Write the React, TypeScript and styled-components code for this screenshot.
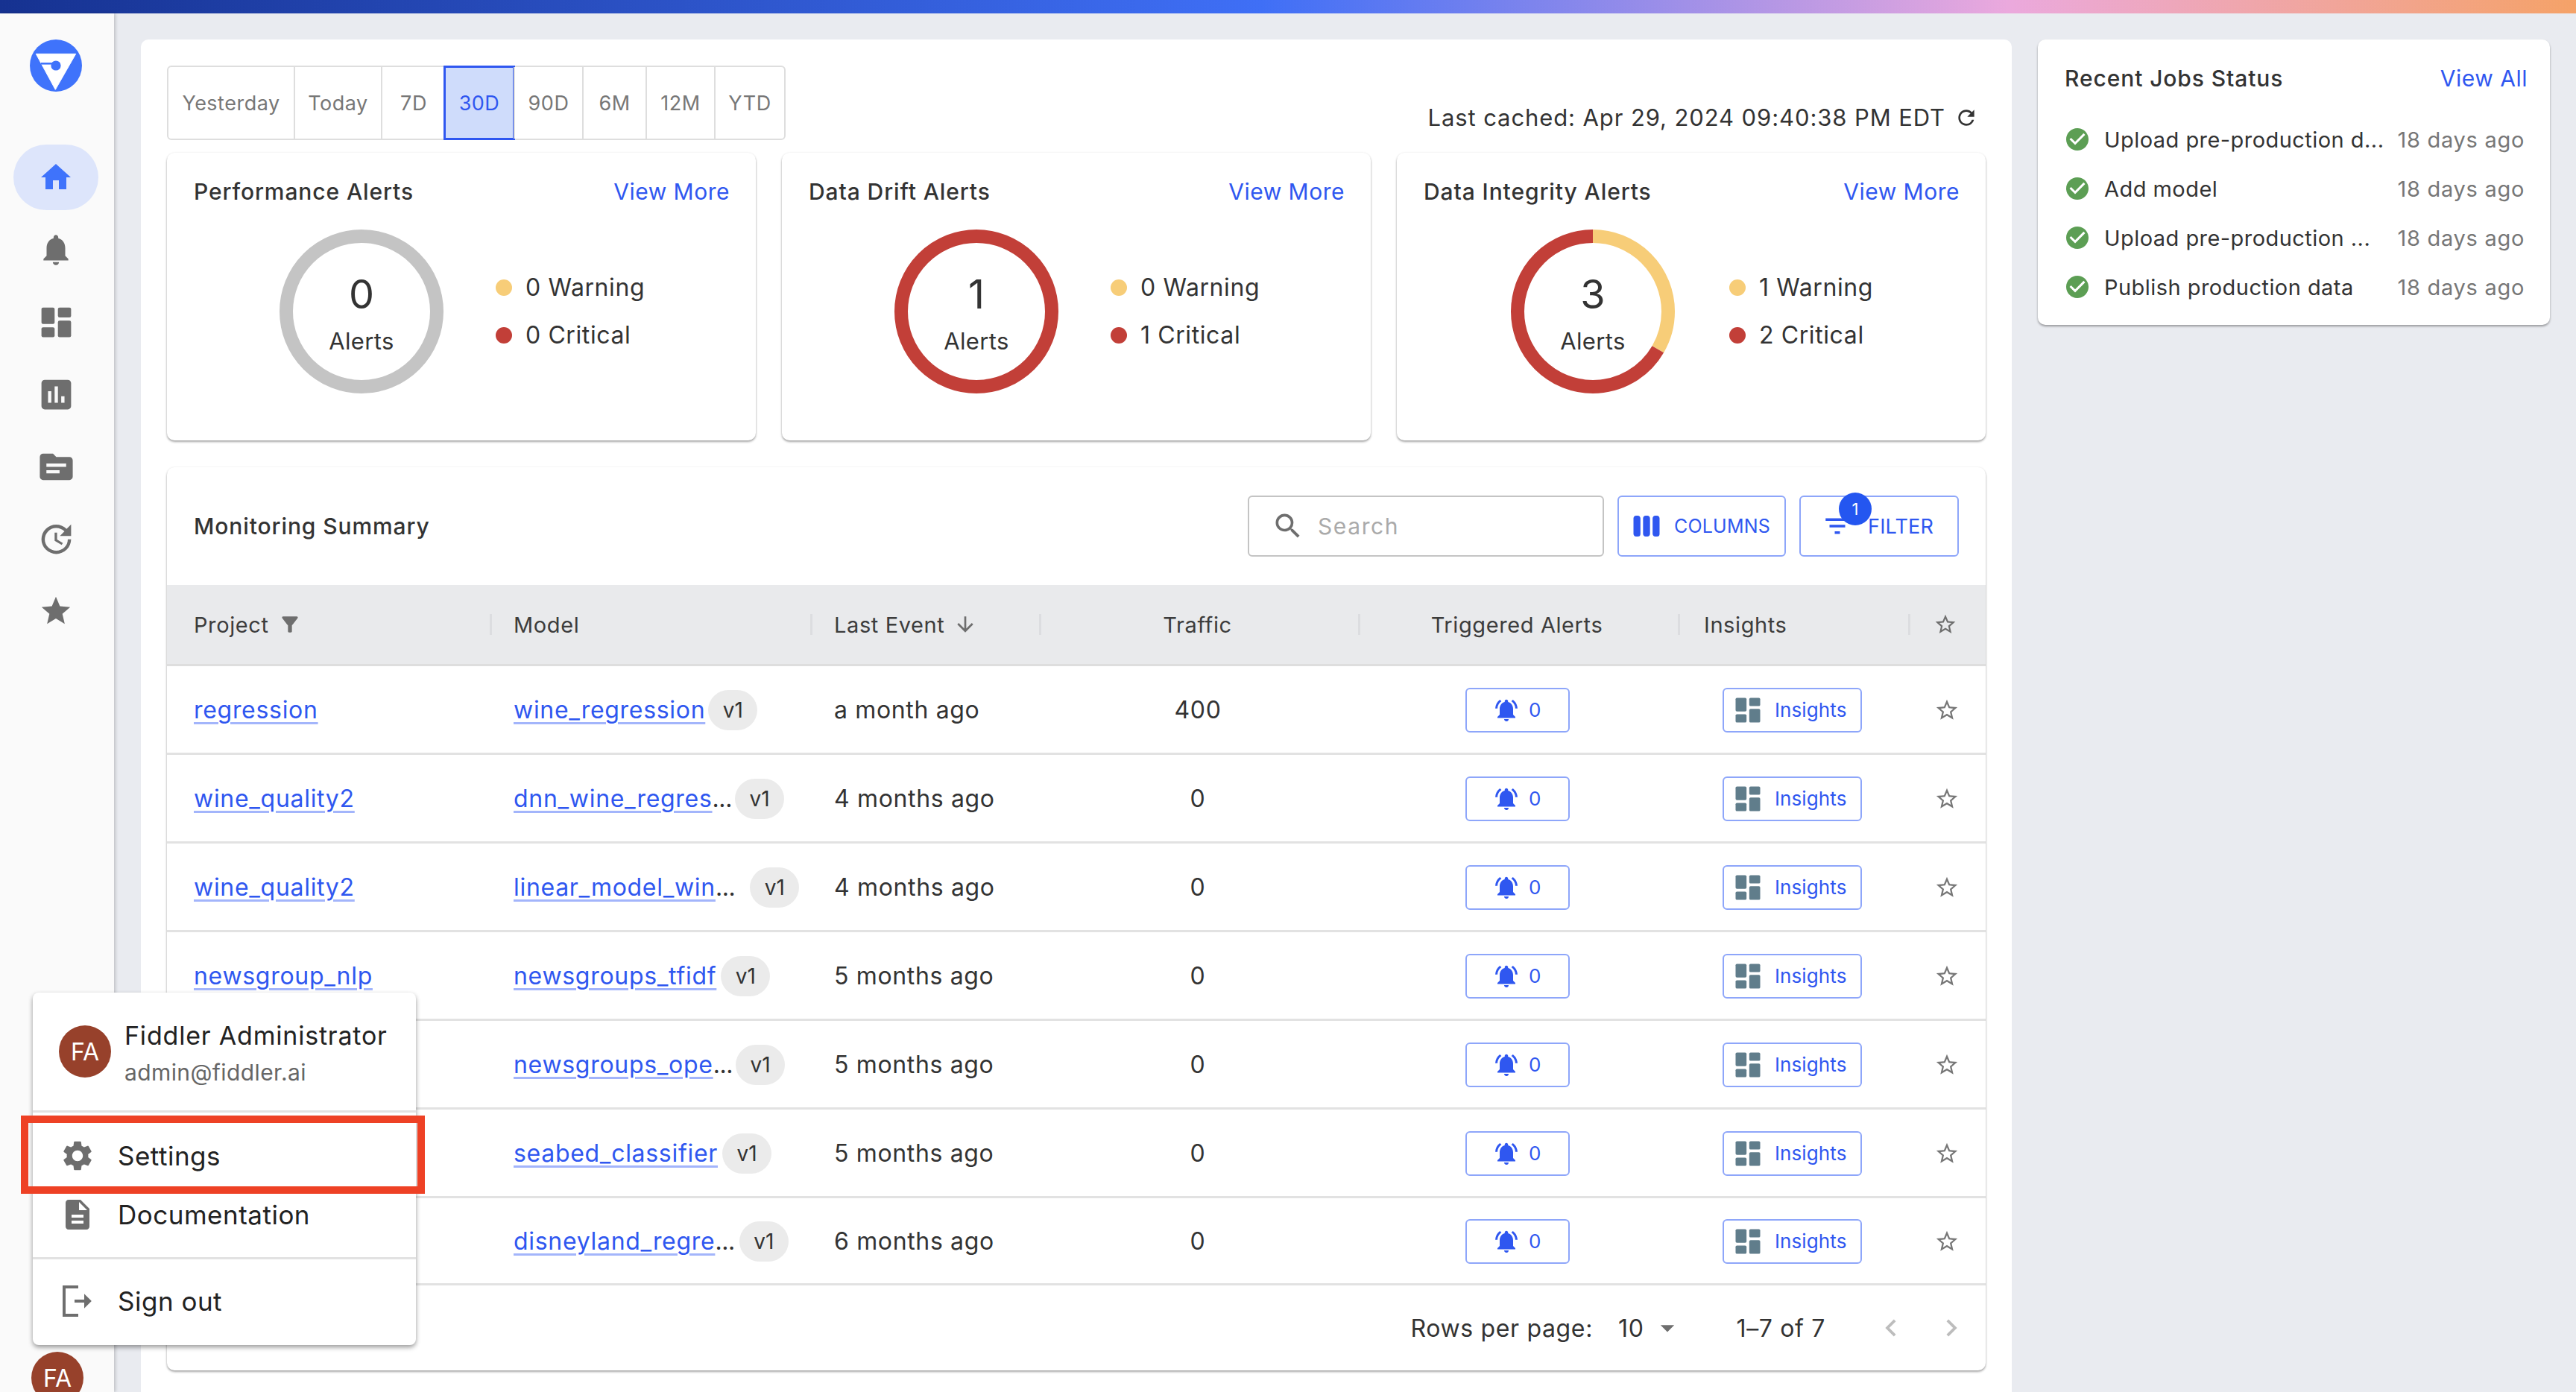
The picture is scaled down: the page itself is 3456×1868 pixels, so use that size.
import styled, { createGlobalStyle } from "styled-components";
import {
    MdHome, MdNotifications, MdAssessment, MdTopic, MdUpdate, MdStar, MdStarBorder,
    MdSettings, MdDescription, MdFilterList, MdViewWeek, MdSearch, MdCheckCircle, MdNotificationsActive,
    MdFilterAlt, MdArrowDownward, MdRefresh, MdArrowDropDown, MdChevronLeft, MdChevronRight,
} from "react-icons/md";

const GlobalStyle = createGlobalStyle`
    html, body {
        margin: 0;
        padding: 0;
        background: #e9ebf0;
    }
    * {
        box-sizing: border-box;
    }
    body {
        font-family: Inter, "Noto Sans", sans-serif;
        color: #333;
    }
`
const Page = styled.div`
    position: relative;
    width: 3456px;
    height: 1868px;
    overflow: hidden;
    display: flex;
    flex-direction: column;
`
const TopBar = styled.div`
    height: 18px;
    flex: none;
    background: linear-gradient(90deg, #163291 0%, #3f6ff6 49%, #eba9dd 78%, #f5a268 100%);
`
const Body = styled.div`
    flex: 1;
    display: flex;
    min-height: 0;
`
const Sidebar = styled.nav`
    width: 153px;
    flex: none;
    background: #fafafa;
    box-shadow: 2px 0 4px rgba(0, 0, 0, 0.18);
    display: flex;
    flex-direction: column;
    align-items: center;
    padding: 35px 3px 0 0;
`
const Logo = styled.svg`
    width: 70px;
    height: 70px;
    margin-bottom: 71px;
    flex: none;
`
const NavItem = styled.div<{ $active?: boolean; $size?: number }>`
    width: 114px;
    height: 88px;
    margin-bottom: 9px;
    border-radius: 44px;
    display: flex;
    align-items: center;
    justify-content: center;
    font-size: ${props => props.$size || 53}px;
    color: ${props => props.$active ? "#3f73fb" : "#6e6e6e"};
    background: ${props => props.$active ? "#dde5fb" : "transparent"};
`
const Main = styled.main`
    flex: 1;
    display: grid;
    grid-template-columns: 2510px 687px;
    column-gap: 35px;
    padding: 35px 35px 0 36px;
    align-items: start;
`
const Panel = styled.section`
    background: #fff;
    border-radius: 10px 10px 0 0;
    height: 1900px;
    padding: 35px;
`
const RangeRow = styled.div`
    display: flex;
    justify-content: space-between;
    align-items: flex-end;
    height: 100px;
    margin-bottom: 17px;
`
const Range = styled.div`
    display: flex;
    height: 100px;
    border: 2px solid #dedede;
    border-radius: 6px;
`
const RangeItem = styled.div<{ $w: number; $active?: boolean }>`
    width: ${props => props.$w}px;
    display: flex;
    align-items: center;
    justify-content: center;
    font-size: 27px;
    letter-spacing: 0.5px;
    color: ${props => props.$active ? "#2f57f0" : "#777"};
    background: ${props => props.$active ? "#cfdcfb" : "transparent"};
    outline: ${props => props.$active ? "3px solid #2f57f0" : "none"};
    outline-offset: -1px;
    border-left: ${props => props.$active ? "none" : "2px solid #dedede"};
    &:first-child {
        border-left: none;
    }
`
const Cached = styled.div`
    display: flex;
    align-items: center;
    gap: 12px;
    font-size: 31px;
    letter-spacing: 0.9px;
    padding-bottom: 12px;
    margin-right: 10px;
    color: #333;
    svg {
        font-size: 32px;
    }
`
const AlertGrid = styled.div`
    display: grid;
    grid-template-columns: repeat(3, 790px);
    column-gap: 35px;
    margin-bottom: 36px;
`
const Card = styled.div`
    background: #fff;
    border-radius: 10px;
    height: 386px;
    padding: 34px 35px 0 36px;
    box-shadow: 0 2px 3px rgba(0, 0, 0, 0.35), 0 0 3px rgba(0, 0, 0, 0.06);
`
const CardHead = styled.div`
    display: flex;
    justify-content: space-between;
    align-items: center;
    height: 36px;
`
const CardTitle = styled.h3`
    margin: 0;
    font-size: 30px;
    font-weight: 500;
    letter-spacing: 0.9px;
    color: #333;
`
const MoreLink = styled.a`
    font-size: 30px;
    letter-spacing: 0.5px;
    color: #2f57f0;
`
const CardBody = styled.div<{ $left: number }>`
    display: flex;
    align-items: center;
    margin: 33px 0 0 ${props => props.$left}px;
`
const Donut = styled.div<{ $right: number }>`
    position: relative;
    width: 220px;
    height: 220px;
    flex: none;
    margin-right: ${props => props.$right}px;
    svg {
        display: block;
    }
`
const DonutText = styled.div`
    position: absolute;
    inset: 0;
    display: flex;
    flex-direction: column;
    align-items: center;
    padding-top: 59px;
`
const DonutNum = styled.div`
    font-size: 54px;
    line-height: 56px;
    margin-bottom: 18px;
`
const DonutLabel = styled.div`
    font-size: 31px;
    line-height: 34px;
    letter-spacing: 0.4px;
`
const Legend = styled.div`
    display: flex;
    flex-direction: column;
    gap: 28px;
`
const LegendRow = styled.div`
    display: flex;
    align-items: center;
    gap: 18px;
    font-size: 32px;
    line-height: 36px;
    letter-spacing: 0.6px;
`
const Dot = styled.span<{ $color: string }>`
    width: 22px;
    height: 22px;
    border-radius: 50%;
    background: ${props => props.$color};
`
const TableCard = styled.div`
    background: #fff;
    border-radius: 10px;
    height: 1212px;
    box-shadow: 0 2px 3px rgba(0, 0, 0, 0.35), 0 0 3px rgba(0, 0, 0, 0.06);
`
const Toolbar = styled.div`
    height: 158px;
    display: flex;
    align-items: center;
    padding: 0 36px;
`
const ToolbarTitle = styled(CardTitle)`
    flex: 1;
`
const SearchBox = styled.div`
    width: 478px;
    height: 82px;
    border: 2px solid #c4c4c4;
    border-radius: 6px;
    display: flex;
    align-items: center;
    gap: 18px;
    padding: 0 30px;
    font-size: 30px;
    letter-spacing: 1.6px;
    color: #aaa;
    margin-right: 18px;
    svg {
        font-size: 44px;
        color: #6e6e6e;
    }
`
const OutlineButton = styled.div<{ $w: number }>`
    position: relative;
    width: ${props => props.$w}px;
    height: 82px;
    border: 2px solid #8ea6fa;
    border-radius: 6px;
    display: flex;
    align-items: center;
    color: #2f57f0;
    font-size: 25px;
    letter-spacing: 0.2px;
    svg {
        font-size: 42px;
    }
`
const ColumnsButton = styled(OutlineButton)`
    gap: 16px;
    padding-left: 16px;
    margin-right: 18px;
`
const FilterButton = styled(OutlineButton)`
    gap: 20px;
    padding-left: 28px;
    font-size: 27px;
`
const Badge = styled.span`
    position: absolute;
    left: 51px;
    top: -6px;
    width: 44px;
    height: 44px;
    border-radius: 50%;
    background: #2456f0;
    color: #fff;
    font-size: 22px;
    display: flex;
    align-items: center;
    justify-content: center;
`
const gridCols = "436px 430px 307px 428px 429px 309px 101px";
const HeadRow = styled.div`
    display: grid;
    grid-template-columns: ${gridCols};
    height: 109px;
    align-items: center;
    background: #e9eaec;
    border-bottom: 3px solid #dedede;
`
const HeadCell = styled.div<{ $center?: number; $noSep?: boolean; $pad?: number }>`
    height: 28px;
    display: flex;
    align-items: center;
    justify-content: ${props => props.$center ? "center" : "flex-start"};
    gap: 12px;
    padding-left: ${props => props.$center ? 0 : props.$pad || 29}px;
    padding-right: ${props => props.$center || 0}px;
    border-right: ${props => props.$noSep ? "none" : "3px solid #dcdde0"};
    font-size: 29px;
    letter-spacing: 0.6px;
    color: #3c3c3c;
    svg {
        font-size: 32px;
        color: #6e6e6e;
        flex: none;
    }
`
const Row = styled.div<{ $h: number }>`
    display: grid;
    grid-template-columns: ${gridCols};
    height: ${props => props.$h}px;
    align-items: center;
    border-bottom: 3px solid #e2e2e2;
`
const Cell = styled.div<{ $center?: number; $pad?: number }>`
    display: flex;
    align-items: center;
    justify-content: ${props => props.$center ? "center" : "flex-start"};
    padding-top: 1px;
    padding-left: ${props => props.$center ? 0 : props.$pad || 29}px;
    padding-right: ${props => props.$center || 0}px;
    font-size: 32px;
    letter-spacing: 0.65px;
    white-space: nowrap;
`
const TableLink = styled.a`
    color: #2f57f0;
    font-size: 32px;
    letter-spacing: 0.7px;
    text-decoration: underline;
    text-decoration-color: #a3b5fb;
    text-decoration-thickness: 3px;
    text-underline-offset: 5px;
`
const Dots = styled.span`
    color: #333;
    letter-spacing: -0.4px;
`
const Chip = styled.span<{ $gap: number }>`
    width: 66px;
    height: 54px;
    margin-left: ${props => props.$gap}px;
    border-radius: 27px;
    background: #ebebeb;
    font-size: 28px;
    display: flex;
    align-items: center;
    justify-content: center;
    letter-spacing: 0;
`
const AlertButton = styled.div`
    width: 140px;
    height: 60px;
    border: 2px solid #8ea6fa;
    border-radius: 6px;
    display: flex;
    align-items: center;
    justify-content: center;
    gap: 12px;
    color: #2f57f0;
    font-size: 26px;
    svg {
        font-size: 36px;
    }
`
const InsightButton = styled.div`
    width: 187px;
    height: 60px;
    border: 2px solid #8ea6fa;
    border-radius: 6px;
    margin-left: 28px;
    display: flex;
    align-items: center;
    gap: 14px;
    padding-left: 10px;
    color: #2f57f0;
    font-size: 26px;
    letter-spacing: 0.1px;
    svg {
        font-size: 44px;
        color: #607d8b;
        flex: none;
    }
`
const StarIcon = styled(MdStarBorder)`
    font-size: 34px;
    color: #777;
    margin-left: 31px;
    display: block;
`
const Footer = styled.div`
    height: 114px;
    display: flex;
    align-items: center;
    justify-content: flex-end;
    padding-right: 23px;
    font-size: 32px;
    letter-spacing: 0.65px;
    color: #333;
`
const RowsLabel = styled.span`
    margin-right: 34px;
`
const PageSize = styled.span`
    display: flex;
    align-items: center;
    margin-right: 71px;
    svg {
        font-size: 44px;
        color: #6e6e6e;
        margin-left: 9px;
    }
`
const PageCount = styled.span`
    margin-right: 30px;
`
const Chevron = styled.span`
    display: flex;
    font-size: 46px;
    color: #bdbdbd;
    margin-left: 35px;
`
const JobsCard = styled.aside`
    background: #fff;
    border-radius: 10px;
    height: 383px;
    padding: 34px 30px 0 36px;
    box-shadow: 0 2px 3px rgba(0, 0, 0, 0.35);
`
const JobsList = styled.div`
    margin-top: 31px;
    display: flex;
    flex-direction: column;
`
const JobRow = styled.div`
    height: 66px;
    display: flex;
    align-items: center;
    font-size: 29px;
    letter-spacing: 0.45px;
    svg {
        font-size: 36px;
        color: #5c9e54;
        margin: 0 18px 0 -1px;
        flex: none;
    }
`
const JobName = styled.span`
    flex: 1;
    white-space: nowrap;
    color: #333;
`
const JobTime = styled.span`
    color: #777;
    margin-right: 4px;
    letter-spacing: 0.7px;
    white-space: nowrap;
`
const Popover = styled.div`
    position: absolute;
    left: 44px;
    top: 1332px;
    width: 514px;
    height: 473px;
    background: #fff;
    border-radius: 8px;
    box-shadow: 0 3px 6px rgba(0, 0, 0, 0.4);
`
const PopHead = styled.div`
    height: 161px;
    display: flex;
    align-items: center;
    gap: 18px;
    padding-left: 35px;
    border-bottom: 3px solid #e2e2e2;
`
const Avatar = styled.div`
    width: 70px;
    height: 70px;
    border-radius: 50%;
    background: #97412b;
    color: #fff;
    font-size: 32px;
    display: flex;
    align-items: center;
    justify-content: center;
    flex: none;
`
const PopText = styled.div`
    padding-top: 4px;
`
const PopName = styled.div`
    font-size: 34px;
    line-height: 40px;
    letter-spacing: 0.8px;
    color: #222;
`
const PopMail = styled.div`
    font-size: 30px;
    line-height: 36px;
    letter-spacing: 0.4px;
    color: #666;
    margin-top: 11px;
`
const PopItem = styled.div<{ $h: number }>`
    height: ${props => props.$h}px;
    display: flex;
    align-items: center;
    gap: 30px;
    padding-left: 36px;
    font-size: 35px;
    line-height: 42px;
    letter-spacing: 0.5px;
    color: #222;
    svg {
        width: 48px;
        height: 48px;
        color: #6e6e6e;
        flex: none;
    }
`
const DocItem = styled(PopItem)`
    align-items: flex-start;
    svg {
        margin-top: -3px;
    }
`
const SignOutItem = styled(PopItem)`
    padding-bottom: 3px;
`
const PopDivider = styled.div`
    height: 3px;
    background: #e2e2e2;
`
const Highlight = styled.div`
    position: absolute;
    left: 28px;
    top: 1497px;
    width: 542px;
    height: 105px;
    border: 10px solid #ee4125;
`
const BottomAvatar = styled(Avatar)`
    position: absolute;
    left: 42px;
    top: 1814px;
`

const CX = 110, CY = 110, R = 101, SW = 18;
const CIRC = 2 * Math.PI * R;

function Ring({ segments }: { segments: { color: string; part: number }[] }) {
    let offset = 0;
    return (
        <svg width="220" height="220" viewBox="0 0 220 220">
            {segments.map(seg => {
                const el = (
                    <circle
                        key={seg.color}
                        cx={CX} cy={CY} r={R} fill="none" stroke={seg.color} strokeWidth={SW}
                        strokeDasharray={`${seg.part * CIRC} ${CIRC}`}
                        strokeDashoffset={-offset * CIRC}
                        transform={`rotate(-90 ${CX} ${CY})`}
                    />
                );
                offset += seg.part;
                return el;
            })}
        </svg>
    );
}

// the rounded variant of the dashboard glyph
function DashboardIcon() {
    return (
        <svg width="1em" height="1em" viewBox="0 0 24 24" fill="currentColor">
            <rect x="3" y="3" width="8" height="10" rx="1" />
            <rect x="13" y="3" width="8" height="6" rx="1" />
            <rect x="3" y="15" width="8" height="6" rx="1" />
            <rect x="13" y="11" width="8" height="10" rx="1" />
        </svg>
    );
}

const alertCards = [
    { title: "Performance Alerts", total: 0, warn: 0, crit: 0, left: 115, right: 70, segments: [{ color: "#c4c4c4", part: 1 }] },
    { title: "Data Drift Alerts", total: 1, warn: 0, crit: 1, left: 115, right: 70, segments: [{ color: "#c23f38", part: 1 }] },
    { title: "Data Integrity Alerts", total: 3, warn: 1, crit: 2, left: 117, right: 73, segments: [{ color: "#f7cd78", part: 1 / 3 }, { color: "#c23f38", part: 2 / 3 }] },
];

const ranges = [
    { label: "Yesterday", w: 168 }, { label: "Today", w: 117 }, { label: "7D", w: 86 }, { label: "30D", w: 92, active: true },
    { label: "90D", w: 92 }, { label: "6M", w: 85 }, { label: "12M", w: 92 }, { label: "YTD", w: 94 },
];

// the popover covers the project name of the last three rows
const rows = [
    { project: "regression", model: "wine_regression", cut: false, gap: 4, last: "a month ago", traffic: "400", h: 119 },
    { project: "wine_quality2", model: "dnn_wine_regres", cut: true, gap: 4, last: "4 months ago", traffic: "0", h: 119 },
    { project: "wine_quality2", model: "linear_model_win", cut: true, gap: 20, last: "4 months ago", traffic: "0", h: 119 },
    { project: "newsgroup_nlp", model: "newsgroups_tfidf", cut: false, gap: 6, last: "5 months ago", traffic: "0", h: 119 },
    { project: "", model: "newsgroups_ope", cut: true, gap: 4, last: "5 months ago", traffic: "0", h: 119 },
    { project: "", model: "seabed_classifier", cut: false, gap: 6, last: "5 months ago", traffic: "0", h: 119 },
    { project: "", model: "disneyland_regre", cut: true, gap: 6, last: "6 months ago", traffic: "0", h: 117 },
];

const jobs = ["Upload pre-production d...", "Add model", "Upload pre-production ...", "Publish production data"];

const navItems = [
    { icon: <MdNotifications />, size: 50 },
    { icon: <DashboardIcon />, size: 53 },
    { icon: <MdAssessment />, size: 53 },
    { icon: <MdTopic />, size: 53 },
    { icon: <MdUpdate />, size: 53 },
    { icon: <MdStar />, size: 46 },
];

export default function App() {
    return (
        <Page>
            <GlobalStyle />
            <TopBar />
            <Body>
                <Sidebar>
                    <Logo viewBox="0 0 70 70">
                        <circle cx="35" cy="35" r="35" fill="#3f73fb" />
                        <path d="M8.3 19.3 H61.7 L34.3 67.3 Z" fill="#fff" stroke="#fff" strokeLinejoin="round" />
                        <path d="M15 32.3 H35" stroke="#3f73fb" strokeWidth="2.6" />
                        <circle cx="35" cy="35" r="6.6" fill="#3f73fb" />
                    </Logo>
                    <NavItem $active $size={48}><MdHome /></NavItem>
                    {navItems.map((item, i) => <NavItem key={i} $size={item.size}>{item.icon}</NavItem>)}
                </Sidebar>
                <Main>
                    <Panel>
                        <RangeRow>
                            <Range>
                                {ranges.map(r => <RangeItem key={r.label} $w={r.w} $active={r.active}>{r.label}</RangeItem>)}
                            </Range>
                            <Cached>Last cached: Apr 29, 2024 09:40:38 PM EDT <MdRefresh /></Cached>
                        </RangeRow>
                        <AlertGrid>
                            {alertCards.map(card => (
                                <Card key={card.title}>
                                    <CardHead>
                                        <CardTitle>{card.title}</CardTitle>
                                        <MoreLink>View More</MoreLink>
                                    </CardHead>
                                    <CardBody $left={card.left}>
                                        <Donut $right={card.right}>
                                            <Ring segments={card.segments} />
                                            <DonutText>
                                                <DonutNum>{card.total}</DonutNum>
                                                <DonutLabel>Alerts</DonutLabel>
                                            </DonutText>
                                        </Donut>
                                        <Legend>
                                            <LegendRow><Dot $color="#f7cd78" />{card.warn} Warning</LegendRow>
                                            <LegendRow><Dot $color="#c23f38" />{card.crit} Critical</LegendRow>
                                        </Legend>
                                    </CardBody>
                                </Card>
                            ))}
                        </AlertGrid>
                        <TableCard>
                            <Toolbar>
                                <ToolbarTitle>Monitoring Summary</ToolbarTitle>
                                <SearchBox><MdSearch />Search</SearchBox>
                                <ColumnsButton $w={226}><MdViewWeek />COLUMNS</ColumnsButton>
                                <FilterButton $w={214}><MdFilterList />FILTER<Badge>1</Badge></FilterButton>
                            </Toolbar>
                            <HeadRow>
                                <HeadCell $pad={36}>Project <MdFilterAlt /></HeadCell>
                                <HeadCell>Model</HeadCell>
                                <HeadCell>Last Event <MdArrowDownward /></HeadCell>
                                <HeadCell $center={6}>Traffic</HeadCell>
                                <HeadCell $center={6}>Triggered Alerts</HeadCell>
                                <HeadCell $pad={32}>Insights</HeadCell>
                                <HeadCell $noSep $pad={31}><MdStarBorder /></HeadCell>
                            </HeadRow>
                            {rows.map((row, i) => (
                                <Row key={i} $h={row.h}>
                                    <Cell $pad={36}>{row.project && <TableLink>{row.project}</TableLink>}</Cell>
                                    <Cell>
                                        <TableLink>{row.model}</TableLink>
                                        {row.cut && <Dots>...</Dots>}
                                        <Chip $gap={row.gap}>v1</Chip>
                                    </Cell>
                                    <Cell>{row.last}</Cell>
                                    <Cell $center={8}>{row.traffic}</Cell>
                                    <Cell $center={8}><AlertButton><MdNotificationsActive />0</AlertButton></Cell>
                                    <Cell $pad={29}><InsightButton><DashboardIcon />Insights</InsightButton></Cell>
                                    <Cell $pad={1}><StarIcon /></Cell>
                                </Row>
                            ))}
                            <Footer>
                                <RowsLabel>Rows per page:</RowsLabel>
                                <PageSize>10<MdArrowDropDown /></PageSize>
                                <PageCount>1–7 of 7</PageCount>
                                <Chevron><MdChevronLeft /></Chevron>
                                <Chevron><MdChevronRight /></Chevron>
                            </Footer>
                        </TableCard>
                    </Panel>
                    <JobsCard>
                        <CardHead>
                            <CardTitle>Recent Jobs Status</CardTitle>
                            <MoreLink>View All</MoreLink>
                        </CardHead>
                        <JobsList>
                            {jobs.map(job => (
                                <JobRow key={job}><MdCheckCircle /><JobName>{job}</JobName><JobTime>18 days ago</JobTime></JobRow>
                            ))}
                        </JobsList>
                    </JobsCard>
                </Main>
            </Body>
            <Popover>
                <PopHead>
                    <Avatar>FA</Avatar>
                    <PopText>
                        <PopName>Fiddler Administrator</PopName>
                        <PopMail>admin@fiddler.ai</PopMail>
                    </PopText>
                </PopHead>
                <PopItem $h={116}><MdSettings />Settings</PopItem>
                <DocItem $h={78}><MdDescription />Documentation</DocItem>
                <PopDivider />
                <SignOutItem $h={115}>
                    <svg viewBox="0 0 24 24" fill="none" stroke="currentColor" strokeWidth="2">
                        <path d="M12.5 2.5 H3 V21.5 H12.5" />
                        <path d="M10 12 H20" />
                        <path d="M20 12 L17.5 9.5 V14.5 Z" fill="currentColor" />
                    </svg>
                    Sign out
                </SignOutItem>
            </Popover>
            <Highlight />
            <BottomAvatar>FA</BottomAvatar>
        </Page>
    );
}
